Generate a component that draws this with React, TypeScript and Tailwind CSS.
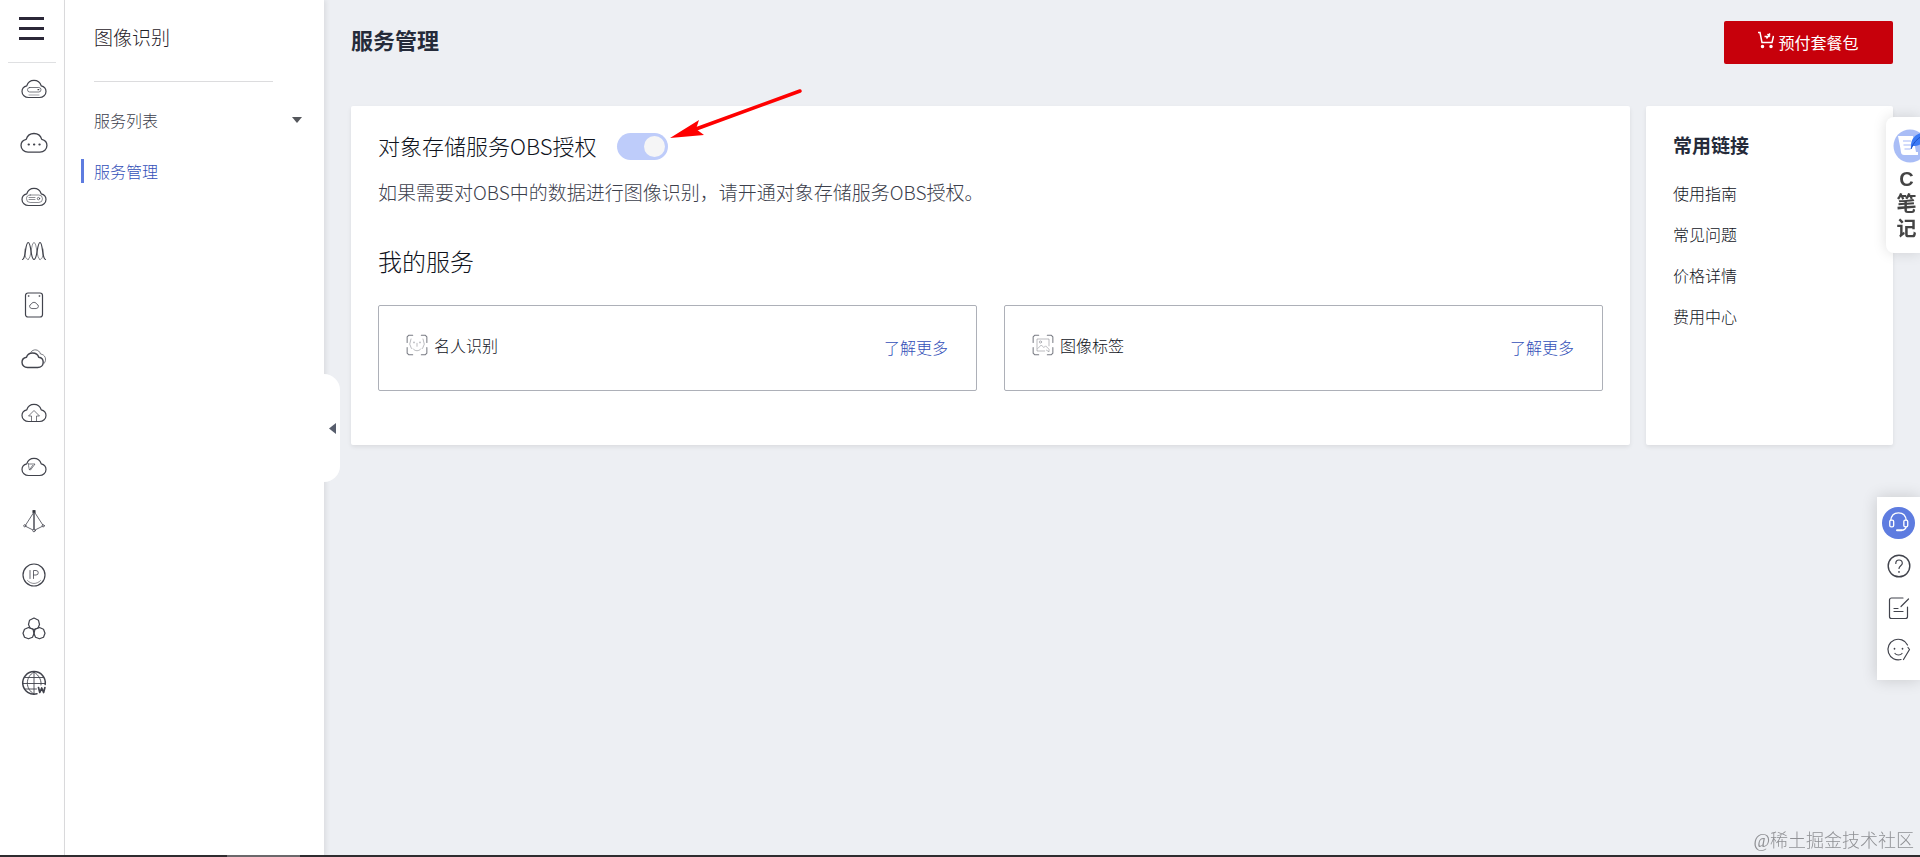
import { useState } from "react";
import type { ReactNode } from "react";

const CLOUD =
  "M8 19.5C4.400 19.500 1.500 17 1.500 13.500C1.500 10.600 3.500 8.400 6.300 7.800C7.300 4.600 10 2.300 13.500 2.300C17 2.300 19.700 4.600 20.700 7.800C23.500 8.400 25.500 10.600 25.500 13.500C25.500 17 22.600 19.500 19 19.500Z";

const Icon = ({ children, size = 28 }: { children: ReactNode; size?: number }) => (
  <svg
    width={size}
    height={size}
    viewBox="0 0 28 28"
    fill="none"
    stroke="#41434c"
    strokeWidth="1.2"
    strokeLinecap="round"
    strokeLinejoin="round"
    aria-hidden="true"
  >
    {children}
  </svg>
);

const railItems: { label: string; icon: ReactNode }[] = [
  {
    label: "弹性云服务器",
    icon: (
      <g transform="translate(.5 3)">
        <path d={CLOUD} />
        <rect x="7" y="9.500" width="13.500" height="4.500" rx="2.200" strokeWidth=".7" />
        <path d="M17.500 11.700h.8" />
        <path d="M8.500 17h10" strokeWidth=".5" />
      </g>
    ),
  },
  {
    label: "云耀服务器",
    icon: (
      <g transform="translate(-.6 2) scale(1.08)">
        <path d={CLOUD} />
        <path d="M8.500 12.500h.3M13.500 12.500h.3M18.500 12.500h.3" strokeWidth="1.900" />
      </g>
    ),
  },
  {
    label: "裸金属服务器",
    icon: (
      <g transform="translate(.5 3)">
        <path d={CLOUD} />
        <rect x="6" y="9" width="16" height="7.500" rx="3.700" strokeWidth=".6" />
        <path d="M8.500 11.500h6M8.500 13.500h6" strokeWidth=".6" />
        <circle cx="18" cy="12.600" r="1.200" strokeWidth=".7" />
      </g>
    ),
  },
  {
    label: "弹性伸缩",
    icon: (
      <g>
        <path d="M2.500 22.500C6 22 5 5.500 8.200 5.500S10.500 22.500 14 22.500S17 5.500 20 5.500S22 22 25.500 22.500" />
        <path
          d="M8.200 22.500C11.500 22 11 5.500 14 5.500S16.500 22 19.800 22.500M5 12C4.500 20 6 22.500 8.200 22.500M23 12C23.500 20 22 22.500 19.800 22.500"
          strokeWidth=".6"
        />
      </g>
    ),
  },
  {
    label: "云硬盘",
    icon: (
      <g>
        <rect x="5.500" y="2" width="17" height="24" rx="2.500" />
        <path d="M8.500 5h.3M19.300 5h.3" strokeWidth="1.500" />
        <path
          d="M11.500 17.500a2.200 2.200 0 0 1-.3-4.300a3 3 0 0 1 5.600 0a2.200 2.200 0 0 1-.3 4.300z"
          strokeWidth=".8"
        />
      </g>
    ),
  },
  {
    label: "云备份",
    icon: (
      <g>
        <path
          d="M11 7C13 3.800 19 3.800 20.500 9C25 9.500 27.500 14.500 24 18.500"
          strokeWidth=".7"
        />
        <path
          d="M7.500 22.500C4.300 22.500 2 20.300 2 17.300C2 14.600 3.900 12.600 6.500 12.200C7.300 9.600 9.800 8 12.500 8C15.500 8 18 9.600 18.700 12.300C21.300 12.600 23.200 14.600 23.200 17.300C23.200 20.300 21 22.500 17.700 22.500Z"
          strokeWidth="1.400"
        />
      </g>
    ),
  },
  {
    label: "对象存储服务",
    icon: (
      <g transform="translate(.5 3)">
        <path d={CLOUD} />
        <path d="M11 19v-5H8L13.500 8.500L19 14H16v5" strokeWidth=".7" />
      </g>
    ),
  },
  {
    label: "弹性文件服务",
    icon: (
      <g transform="translate(.5 3)">
        <path d={CLOUD} />
        <path d="M8 7.500C8 11 8.500 12 9 14L12 9.500M9 8h5.500L10 14" strokeWidth=".7" />
      </g>
    ),
  },
  {
    label: "虚拟私有云",
    icon: (
      <g>
        <path d="M14 5L5 19L14 23.500L23 19Z" strokeWidth=".8" />
        <path d="M14 5v17" strokeWidth="1.400" />
        <rect x="13" y="3.500" width="2" height="2" fill="#222" />
        <circle cx="4.800" cy="18.800" r="1.100" fill="#fff" strokeWidth=".8" />
        <circle cx="23.200" cy="18.800" r="1.100" fill="#fff" strokeWidth=".8" />
        <circle cx="14" cy="23.500" r="1.300" fill="#fff" strokeWidth=".8" />
      </g>
    ),
  },
  {
    label: "弹性公网IP",
    icon: (
      <g>
        <circle cx="14" cy="14" r="11" />
        <path d="M7.500 19.500C11 23.500 17 23.500 20.500 19.500" strokeWidth=".6" />
        <path d="M10 9.500v8M13.500 17.500v-8h2.500a2.200 2.200 0 0 1 0 4.500h-2.500" strokeWidth=".8" />
      </g>
    ),
  },
  {
    label: "云容器引擎",
    icon: (
      <g>
        <path d="M14 3L18.500 5.300L19.500 9.500L18 13L14 14.500L10 13L8.500 9.500L9.500 5.300Z" />
        <path d="M8.500 12.500L13 14.200L14 18.500L12.500 22.300L8.500 23.800L4.500 22.300L3 18.200L4.500 14.200Z" />
        <path d="M19.500 12.500L23.500 14.200L25 18.200L23.500 22.300L19.500 23.800L15.500 22.300L14 18.500L15 14.200Z" />
      </g>
    ),
  },
  {
    label: "域名注册",
    icon: (
      <g>
        <path d="M17 24.800A11.300 11.300 0 1 1 25.200 15.500" strokeWidth="1.500" />
        <path d="M14 3v22M14 3C5 8 5 20 14 25M14 3C20 7 21.500 12 21 16M4.500 8.500h19M3 14.500h22M4.500 20h12" strokeWidth=".9" />
        <path d="M18.500 18.500l1.300 5l1.900-4.500l1.900 4.500l1.300-5" strokeWidth="1.700" />
      </g>
    ),
  },
];

const services: { name: string; icon: ReactNode }[] = [
  {
    name: "名人识别",
    icon: (
      <g strokeWidth=".7" stroke="#8d8f96">
        <path d="M7 7L5.500 13L7.500 18M21 7L22.500 13L20.500 18M14 12v3.500M9.500 18.500C11.500 21.500 16.500 21.500 18.500 18.500" />
        <path d="M10.500 10.500v1M17.500 10.500v1" strokeWidth="1.200" />
      </g>
    ),
  },
  {
    name: "图像标签",
    icon: (
      <g strokeWidth=".7" stroke="#8d8f96">
        <path d="M21 15V7H7v14h9M8 18l4-4l3 3l2-2l4 4v3l-3-2" />
        <circle cx="11" cy="10.500" r="1.300" />
      </g>
    ),
  },
];

const links = ["使用指南", "常见问题", "价格详情", "费用中心"];

const Rail = () => (
  <nav
    aria-label="服务导航"
    className="flex w-[65px] shrink-0 flex-col items-center border-r border-[#dcdcde] bg-white"
  >
    <div className="flex h-[63px] w-12 items-start justify-center border-b border-[#dfe0e2] pt-4 pr-[2px]">
      <button type="button" aria-label="菜单" className="flex w-[25px] flex-col gap-[7px] pt-px">
        <span className="h-[3px] w-full bg-[#2b2838]" />
        <span className="h-[3px] w-full bg-[#2b2838]" />
        <span className="h-[3px] w-full bg-[#2b2838]" />
      </button>
    </div>
    <ul className="flex flex-col gap-[26px] pt-3 pl-1">
      {railItems.map((item) => (
        <li key={item.label}>
          <a href="#" aria-label={item.label} className="block">
            <Icon>{item.icon}</Icon>
          </a>
        </li>
      ))}
    </ul>
  </nav>
);

const Sidebar = () => (
  <aside className="relative z-10 w-[259px] shrink-0 bg-white shadow-[2px_0_5px_rgba(0,0,0,0.08)]">
    <h2 className="mr-[51px] ml-[29px] border-b border-[#dcdcde] pt-[23px] pb-[30px] text-[19px] leading-7 text-[#1f2128]">
      图像识别
    </h2>
    <ul className="mt-[26px] flex flex-col gap-[27px] text-base leading-6 text-[#3c404c]">
      <li>
        <button type="button" className="flex w-full items-center justify-between pr-[22px] pl-[29px]">
          服务列表
          <svg width="10" height="6" viewBox="0 0 10 6" fill="#55575c" aria-hidden="true">
            <path d="M0 0h10L5 6z" />
          </svg>
        </button>
      </li>
      <li>
        <a
          href="#"
          aria-current="page"
          className="ml-4 block border-l-3 border-[#5e7ce0] pl-[10px] text-[#3350b8]"
        >
          服务管理
        </a>
      </li>
    </ul>
    <button
      type="button"
      aria-label="收起"
      className="absolute top-[374px] left-full flex h-[108px] w-4 items-center justify-center rounded-r-2xl bg-white"
    >
      <svg width="7" height="11" viewBox="0 0 7 11" fill="#575d6c" aria-hidden="true">
        <path d="M7 0v11L0 5.500z" />
      </svg>
    </button>
  </aside>
);

const ServiceCard = ({ name, icon }: { name: string; icon: ReactNode }) => (
  <div className="flex h-[86px] flex-1 items-center justify-between rounded-xs border border-[#adb0b8] pr-7 pb-[2px] pl-[26px]">
    <div className="flex items-center gap-[5px] pb-1 text-base text-[#10131c]">
      <Icon size={24}>
        <path d="M9 2.500H4.500L2.500 4.500V11M19 2.500h4.500l2 2V11M2.500 17v6.500l2 2H9M25.500 17v6.500l-2 2H19" stroke="#777a82" />
        {icon}
      </Icon>
      {name}
    </div>
    <a href="#" className="text-base text-[#3350b8]">
      了解更多
    </a>
  </div>
);

const NoteWidget = () => (
  <button
    type="button"
    className="fixed top-[117px] right-0 z-20 w-[34px] overflow-hidden rounded-l-lg bg-white pt-3 pb-3 pl-[7px] font-['Liberation_Sans','Noto_Sans_CJK_SC',sans-serif] text-xl leading-6 font-bold text-[#444] shadow-[0_0_14px_rgba(0,0,0,0.13)]"
  >
    <svg width="34" height="34" viewBox="0 0 34 34" className="max-w-none" aria-hidden="true">
      <circle cx="17" cy="17" r="16.500" fill="#a9bdf6" />
      <path d="M5 7h15l3 16h2v3H11c-3 0-3-3-3.500-6z" fill="#fff" />
      <path d="M10 12h8M10.500 16h8M11.500 20h6" stroke="#c3d0fa" strokeWidth="1.500" />
      <path d="M18 20C17 10 22 4 33 3C34 12 28 17 20 17z" fill="#3b7af5" />
      <path d="M18 20C20 14 24 10 29 7" stroke="#1c50c4" fill="none" />
    </svg>
    <span className="flex w-[27px] flex-col items-center gap-px pt-1">
      <span>C</span>
      <span>笔</span>
      <span>记</span>
    </span>
  </button>
);

const HelpBar = () => (
  <div className="fixed top-[497px] right-0 z-20 flex w-[43px] flex-col items-center gap-[14px] bg-white pt-[10px] pb-4 shadow-[0_0_16px_rgba(0,0,0,0.16)]">
    <button type="button" aria-label="客服" className="rounded-full bg-[#5e7ce0]">
      <svg width="33" height="32" viewBox="0 0 33 33" fill="none" stroke="#fff" strokeWidth="1.400" aria-hidden="true">
        <path d="M8.500 14C9 8.500 12 6 16.500 6S24 8.500 24.500 14M24.500 20C24 23 22 24 19.500 24" />
        <rect x="7.500" y="13.500" width="4" height="7" rx="1.500" />
        <rect x="22" y="13.500" width="4" height="7" rx="1.500" />
        <path d="M15 24h4.500" strokeWidth="2.200" strokeLinecap="round" />
      </svg>
    </button>
    <button type="button" aria-label="帮助" className="-mt-px">
      <Icon>
        <circle cx="14" cy="14" r="10.800" strokeWidth="1.400" />
        <path d="M10.800 11.500C10.800 9.200 12.200 8 14 8S17.300 9.200 17.300 11.200C17.300 13.500 14 14 14 16.500" strokeWidth="1.200" />
        <path d="M14 19.800v.2" strokeWidth="1.700" />
      </Icon>
    </button>
    <button type="button" aria-label="反馈">
      <Icon>
        <path d="M18 4H6.500a2 2 0 0 0-2 2v16.500a2 2 0 0 0 2 2h14a2 2 0 0 0 2-2V13M16 12.500L23.500 5" />
        <path d="M9 14.500h4M9 17.500h9" />
      </Icon>
    </button>
    <button type="button" aria-label="满意度">
      <Icon>
        <path d="M16 23.500A10.300 10.300 0 1 1 22.500 9M18.500 23.500L24.500 13.500L23 11.500" />
        <path d="M9.500 12.500v.3M17.500 12.500v.3" strokeWidth="1.700" />
        <path d="M10 17.500C11.500 19.500 15.500 19.500 17 17.500" />
      </Icon>
    </button>
  </div>
);

const App = () => {
  const [authorized, setAuthorized] = useState(true);

  return (
    <div className="flex min-h-screen bg-[#edeff3] font-['Noto_Sans_CJK_SC',sans-serif] font-light">
      <Rail />
      <Sidebar />

      <main className="min-w-0 flex-1 px-[27px] pt-[21px]">
        <header className="flex items-start justify-between">
          <h1 className="text-[22px] leading-9 font-bold text-[#252b3a]">服务管理</h1>
          <button
            type="button"
            className="flex h-[43px] w-[169px] items-center justify-center gap-1 rounded-xs bg-[#c7000b] pb-[2px] text-base font-normal text-white"
          >
            <svg width="16" height="18" viewBox="0 0 16 18" fill="none" stroke="#fff" strokeWidth="1.500" className="mb-1" aria-hidden="true">
              <path d="M0 1.500h2L4 11.500h10L15.500 5M6.500 5.500h5M9.500 3L12 5.500M12 2.500L8.500 7.500" />
              <circle cx="4.500" cy="15.500" r="1" fill="#fff" />
              <circle cx="13" cy="15.500" r="1" fill="#fff" />
            </svg>
            预付套餐包
          </button>
        </header>

        <div className="mt-[42px] flex gap-4">
          <section className="min-w-0 flex-1 rounded-xs bg-white px-[27px] pt-[23px] pb-[54px] shadow-[0_2px_4px_rgba(0,0,0,0.08)]">
            <div className="flex items-start">
              <label htmlFor="obs-auth" className="text-[22px] leading-8 text-[#10131c]">
                对象存储服务OBS授权
              </label>
              <div className="relative mt-1 ml-5 flex">
                <input
                  id="obs-auth"
                  type="checkbox"
                  role="switch"
                  checked={authorized}
                  onChange={(e) => setAuthorized(e.target.checked)}
                  className="flex h-[27px] w-[51px] appearance-none items-center rounded-full bg-[#d7d8da] px-[3px] before:size-[21px] before:rounded-full before:bg-[#f5f5f6] checked:justify-end checked:bg-[#beccfa]"
                />
                <svg
                  width="134"
                  height="52"
                  viewBox="0 0 134 52"
                  className="absolute bottom-5 left-full ml-[2px] max-w-none"
                  aria-hidden="true"
                >
                  <path d="M130 3L26 41" stroke="#fe0000" strokeWidth="3.500" strokeLinecap="round" />
                  <path d="M0 50L29 32L26 41L34 47z" fill="#fe0000" />
                </svg>
              </div>
            </div>
            <p className="mt-[17px] text-[19px] leading-7 text-[#3c404c]">
              如果需要对OBS中的数据进行图像识别，请开通对象存储服务OBS授权。
            </p>

            <h2 className="mt-[39px] text-2xl text-[#10131c]">我的服务</h2>
            <div className="mt-7 flex gap-[27px]">
              {services.map((service) => (
                <ServiceCard key={service.name} name={service.name} icon={service.icon} />
              ))}
            </div>
          </section>

          <section className="w-[247px] shrink-0 rounded-xs bg-white px-[27px] pt-[23px] shadow-[0_2px_4px_rgba(0,0,0,0.08)]">
            <h2 className="text-[19px] leading-8 font-bold text-[#252b3a]">常用链接</h2>
            <ul className="mt-5 flex flex-col gap-[17px] text-base text-[#10131c]">
              {links.map((link) => (
                <li key={link}>
                  <a href="#">{link}</a>
                </li>
              ))}
            </ul>
          </section>
        </div>
      </main>

      <NoteWidget />
      <HelpBar />

      <p className="fixed right-[6px] bottom-[2px] font-['Liberation_Serif','Noto_Sans_CJK_SC',serif] text-lg text-[#8f9094]">
        @稀土掘金技术社区
      </p>
      <div className="fixed inset-x-0 bottom-0 z-30 h-[2px] bg-[#2f2c2f]">
        <div className="ml-[227px] h-full w-[73px] bg-[#6b686b]" />
      </div>
    </div>
  );
};

export default App;
